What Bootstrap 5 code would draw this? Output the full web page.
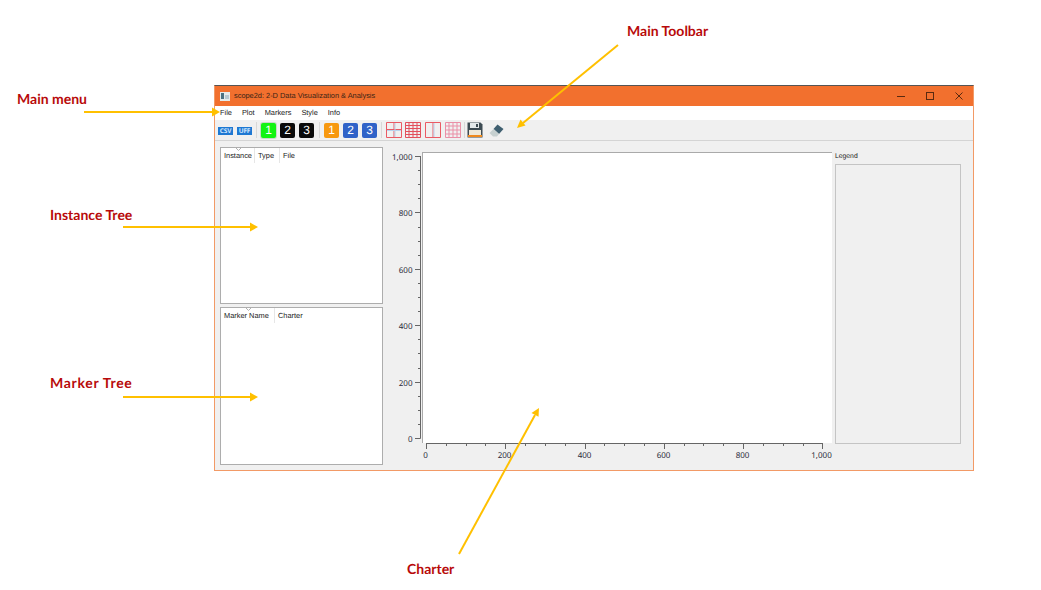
<!DOCTYPE html>
<html lang="en">
<head>
<meta charset="utf-8">
<title>scope2d</title>
<link rel="stylesheet" href="https://cdn.jsdelivr.net/npm/bootstrap@5.3.0/dist/css/bootstrap.min.css">
<style>
html,body{margin:0;height:590px;width:1041px;overflow:hidden;background:#fff}
body{font-family:"Liberation Sans",sans-serif;font-size:7.4px;color:#222;position:relative;text-rendering:geometricPrecision}
.callout{position:absolute;font-family:Lato,"Liberation Sans",sans-serif;font-weight:700;font-size:14px;line-height:16px;color:#b80a0a;white-space:nowrap}
.callout-wide{letter-spacing:.7px}
.arrows{position:absolute;left:0;top:0;z-index:5;pointer-events:none}
.appwin{position:absolute;left:214px;top:85px;width:760px;height:386px;background:#f0f0f0;border:1px solid #f29a66;border-top:1px solid #555}
.titlebar{height:20px;background:#f2702e;color:#3a2416;padding-left:5px}
.appicon{display:block;margin-right:4px}
.winbtns{margin-left:auto;padding-right:10px;gap:21px}
.menubar{height:14px;background:#fff;padding-left:5px;gap:10px;line-height:14px}
.toolrow{height:21px;background:#f0f0f0;border-bottom:1px solid #d4d4d4;padding-left:3px}
.tag{width:15px;height:8px;background:#1e78d2;color:#cfe6ff;font-size:6.5px;line-height:8px;font-weight:700;text-align:center;margin:1px 4px 0 0;font-family:"Noto Sans",sans-serif;letter-spacing:-.2px}
.numbtn{width:15px;height:15px;border-radius:2px;color:#fff;font-size:12px;line-height:15px;text-align:center;margin-right:4px;font-family:"Liberation Sans",sans-serif}
.bg-lime{background:#12f412;box-shadow:0 0 0 1px #c9d9c9}
.bg-ink{background:#0a0a0a}
.bg-amber{background:#f7980f}
.bg-cobalt{background:#2f62c8}
.sep{width:1px;height:16px;background:#d8d8d8;margin:0 4px 0 0}
.sep-after{margin-left:1px}
.sep-tight{margin-right:2px}
.gridico{display:block;margin-right:3px}
.gridico-push{margin-left:1px}
.saveico{margin-right:6px}
.workarea{padding:6px 0 0 5px;height:330px}
.leftcol{width:163px;gap:3px}
.treebox{background:#fff;border:1px solid #adadad;height:157px;position:relative}
.treebox.lower{height:158px}
.treehead{height:15px;line-height:15px;white-space:nowrap}
.treehead span{display:block;padding-left:3px;border-right:1px solid #e6e6e6;height:15px}
.treehead span:last-child{border:0}
.sortmark{position:absolute;top:-1px;width:7px;height:4px}
.sort-a{left:14px}
.sort-b{left:24px}
.colw-34{width:34px}
.colw-25{width:25px}
.colw-54{width:54px}
.chartbox{display:block;flex:none}
.legendcol{width:126px}
.legendcap{height:17px;padding-top:5px;line-height:10px;font-size:6.8px}
.legendbox{height:280px;border:1px solid #c4c4c4;background:#f0f0f0}
.axt{font:8px "Noto Sans","Liberation Sans",sans-serif;fill:#2a2a3a}
</style>
</head>
<body>
<div class="callout" style="left:17px;top:91px">Main menu</div>
<div class="callout" style="left:50px;top:207px">Instance Tree</div>
<div class="callout callout-wide" style="left:50px;top:375px">Marker Tree</div>
<div class="callout" style="left:407px;top:561px">Charter</div>
<div class="callout" style="left:627px;top:23px">Main Toolbar</div>

<div class="appwin d-flex flex-column">
  <div class="titlebar d-flex align-items-center flex-shrink-0">
    <svg class="appicon" width="10" height="9" viewBox="0 0 10 9"><rect width="10" height="9" fill="#e4eaea"/><rect x="1" y="1" width="3" height="6" fill="#4a7080"/><rect x="5" y="3" width="4" height="4" fill="#b8c8d0"/></svg><span>scope2d: 2-D Data Visualization &amp; Analysis</span>
    <div class="winbtns d-flex align-items-center">
      <svg width="8" height="8" viewBox="0 0 8 8"><path d="M0 4.500h8" stroke="#5a2a10" fill="none"/></svg>
      <svg width="8" height="8" viewBox="0 0 8 8"><rect x=".5" y=".5" width="7" height="7" stroke="#5a2a10" fill="none"/></svg>
      <svg width="8" height="8" viewBox="0 0 8 8"><path d="M.5.5l7 7M7.500.5l-7 7" stroke="#5a2a10" fill="none"/></svg>
    </div>
  </div>
  <div class="menubar d-flex flex-shrink-0"><span>File</span><span>Plot</span><span>Markers</span><span>Style</span><span>Info</span></div>
  <div class="toolrow d-flex align-items-center flex-shrink-0">
    <span class="tag">CSV</span><span class="tag">UFF</span><span class="sep"></span>
    <span class="numbtn bg-lime">1</span><span class="numbtn bg-ink">2</span><span class="numbtn bg-ink">3</span><span class="sep sep-after"></span>
    <span class="numbtn bg-amber">1</span><span class="numbtn bg-cobalt">2</span><span class="numbtn bg-cobalt">3</span><span class="sep"></span>
    <svg class="gridico" width="16" height="16" viewBox="0 0 16 16"><path d="M.5.5h15v15H.5z M.5 7.500h15M8 .5v15" fill="none" stroke="#ea5a64"/><path d="M1 8.500h14M9 1v14" stroke="#b9d3ee"/></svg>
    <svg class="gridico" width="16" height="16" viewBox="0 0 16 16"><path d="M.5.5h15v15H.5z M.5 3.500h15M.5 6.500h15M.5 9.500h15M.5 12.500h15M4 .5v15M8 .5v15M12 .5v15" fill="none" stroke="#e2505c"/></svg>
    <svg class="gridico gridico-push" width="16" height="16" viewBox="0 0 16 16"><path d="M.5.5h15v15H.5z M8 .5v15" fill="none" stroke="#ea5a64"/><path d="M9 1v14" stroke="#b9d3ee"/></svg>
    <svg class="gridico gridico-push" width="16" height="16" viewBox="0 0 16 16"><path d="M.5.5h15v15H.5z M.5 4h15M.5 8h15M.5 12h15M4 .5v15M8 .5v15M12 .5v15" fill="none" stroke="#ea8fa6"/></svg>
    <span class="sep sep-tight"></span>
    <svg class="gridico saveico" width="16" height="16" viewBox="0 0 16 16"><path d="M.5.5h13l2 2v13H.5z" fill="#3c4a52"/><rect x="3" y="1" width="9" height="5" fill="#e3e8ea"/><rect x="9" y="2" width="2" height="3" fill="#3c4a52"/><rect x="2" y="8" width="12" height="5" fill="#efe9d8"/><rect x="1" y="13" width="14" height="2" fill="#f08a1d"/></svg>
    <svg width="15" height="13" viewBox="0 0 15 13"><path d="M8.500.5l6 4.500-4.500 5-5.500-5z" fill="#3f5f70"/><path d="M4.500 5l5.500 5-2 2.500H4L.5 9z" fill="#c6d0d0"/></svg>
  </div>
  <div class="workarea d-flex">
    <div class="leftcol d-flex flex-column flex-shrink-0">
      <div class="treebox">
        <svg class="sortmark sort-a" viewBox="0 0 7 4"><path d="M.5.5L3.500 3.500 6.500.5" fill="none" stroke="#b0b0b0"/></svg>
        <div class="treehead d-flex"><span class="colw-34">Instance</span><span class="colw-25">Type</span><span>File</span></div>
      </div>
      <div class="treebox lower">
        <svg class="sortmark sort-b" viewBox="0 0 7 4"><path d="M.5.5L3.500 3.500 6.500.5" fill="none" stroke="#b0b0b0"/></svg>
        <div class="treehead d-flex"><span class="colw-54">Marker Name</span><span>Charter</span></div>
      </div>
    </div>
    <svg class="chartbox" width="452" height="325" viewBox="383 147 452 325" id="chart">
      <rect x="422" y="152" width="410" height="291" fill="#fff"/>
      <path d="M422.500 152V443M422 152.500H832" stroke="#aaa" fill="none"/>
      <path id="ya" stroke="#666" fill="none" d=""/>
      <path id="xa" stroke="#666" fill="none" d=""/>
      <g id="labels"></g>
    </svg>
    <div class="legendcol d-flex flex-column flex-shrink-0">
      <div class="legendcap">Legend</div>
      <div class="legendbox"></div>
    </div>
  </div>
</div>

<svg class="arrows" width="1041" height="590" viewBox="0 0 1041 590">
  <g fill="none" stroke="#ffc000" stroke-width="2">
    <path d="M84 112H213"/><path d="M123 227H251"/><path d="M123 397H251"/>
    <path d="M459 554L535 415"/><path d="M618 45L523 123"/>
  </g>
  <g fill="#ffc000">
    <path d="M220 112l-8-4.500v9z"/><path d="M258 227l-8-4.500v9z"/><path d="M258 397l-8-4.500v9z"/>
    <path d="M539 408l-7.500 5 7 3.800z"/><path d="M517 128l8.500-2.500-5-6z"/>
  </g>
</svg>
<script src="https://cdn.jsdelivr.net/npm/bootstrap@5.3.0/dist/js/bootstrap.bundle.min.js"></script>
<script>
var NS="http://www.w3.org/2000/svg",y="M420.500 156V438.500",x="M426 443.500H823",lab=document.getElementById("labels");
function t(s,px,py,a){var e=document.createElementNS(NS,"text");e.setAttribute("class","axt");e.setAttribute("x",px);e.setAttribute("y",py);e.setAttribute("text-anchor",a);e.textContent=s;lab.appendChild(e);}
for(var i=0;i<=20;i++){
  var py=Math.round(438-i*14.1)+.5, px=Math.round(426+i*19.82)+.5, major=i%4==0;
  y+="M"+(major?415:418)+" "+py+"H420.500";
  x+="M"+px+" 443V"+(major?449:446);
  if(major){var v=i==20?"1,000":String(i*50);t(v,412.5,py+3,"end");t(v,px-1,458,"middle");}
}
document.getElementById("ya").setAttribute("d",y);
document.getElementById("xa").setAttribute("d",x);
</script>
</body>
</html>
